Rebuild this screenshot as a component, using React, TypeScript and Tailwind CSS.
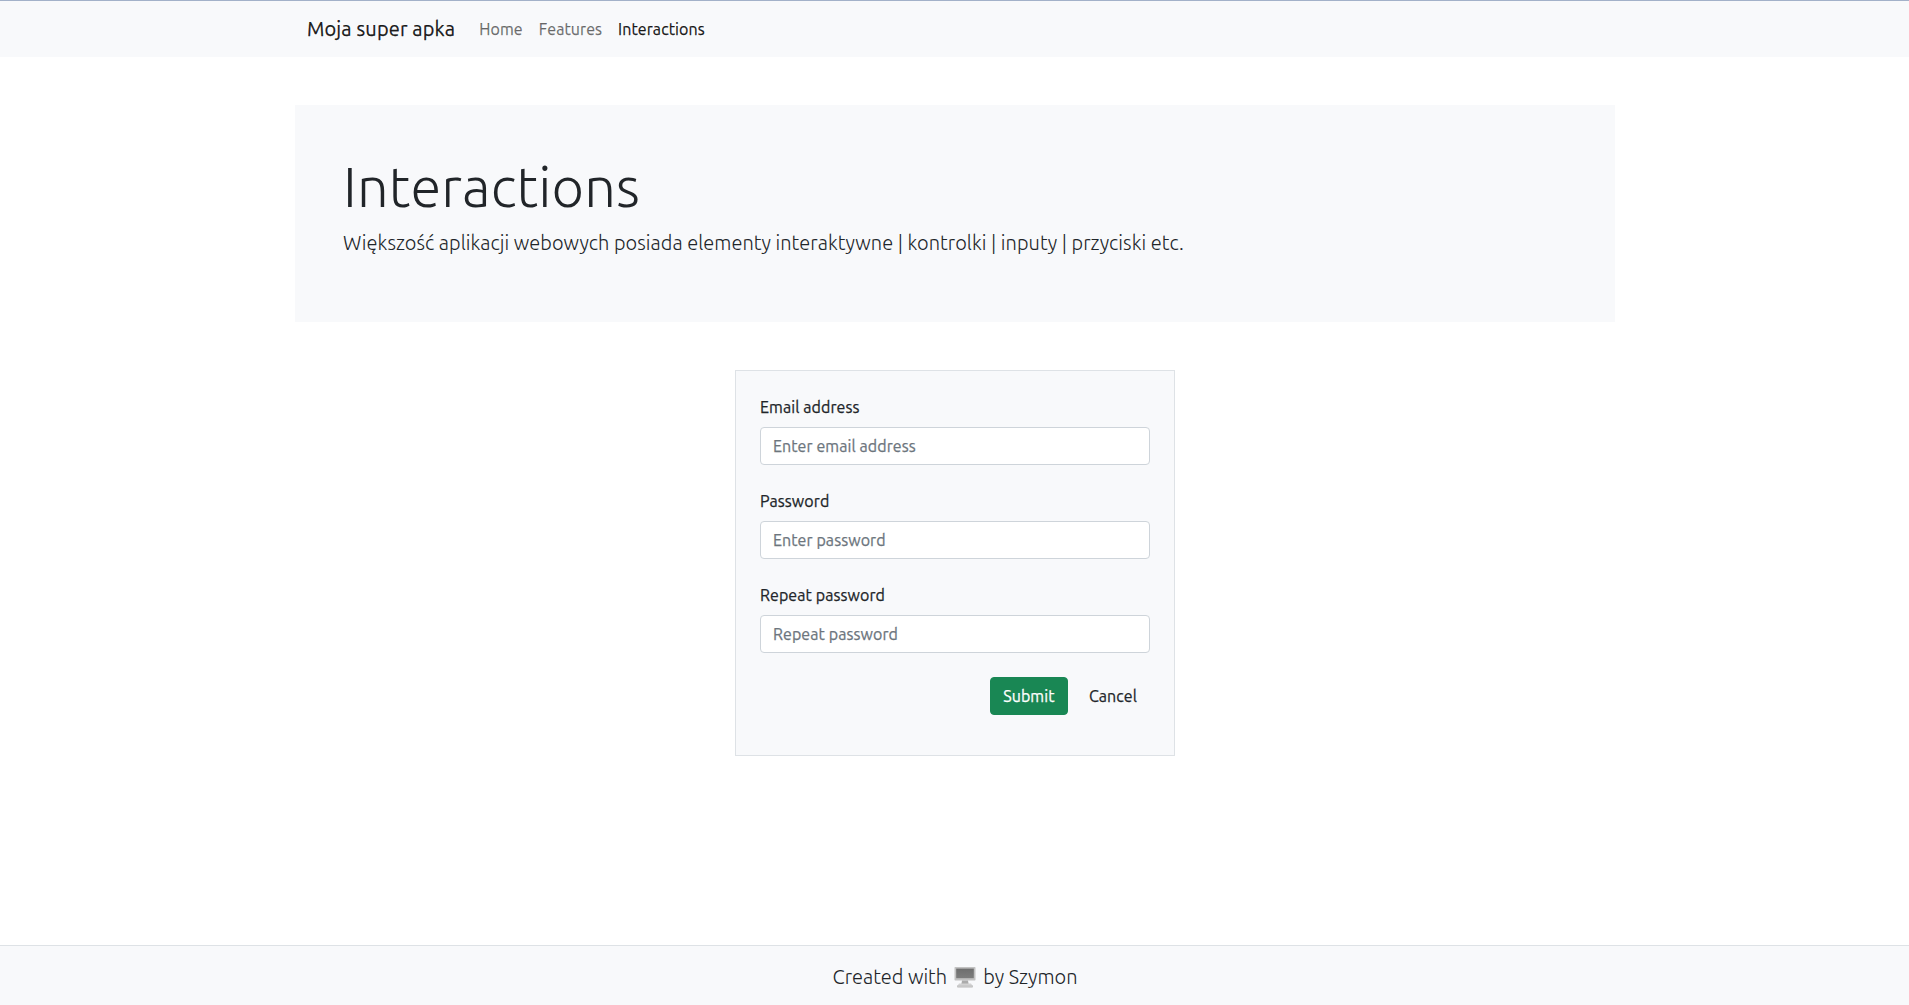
import React from "react";

const links = [
  { label: "Home", active: false },
  { label: "Features", active: false },
  { label: "Interactions", active: true },
];

const fields = [
  { id: "email", label: "Email address", placeholder: "Enter email address", type: "email" },
  { id: "password", label: "Password", placeholder: "Enter password", type: "password" },
  { id: "repeat", label: "Repeat password", placeholder: "Repeat password", type: "password" },
];

function Computer() {
  return (
    <svg className="h-[22px] w-[22px]" viewBox="0 0 22 22" aria-hidden="true">
      <defs>
        <linearGradient id="screen" x1="0" y1="0" x2="0" y2="1">
          <stop offset="0" stopColor="#6e6e6e" />
          <stop offset="1" stopColor="#7d7d7d" />
        </linearGradient>
      </defs>
      <rect x="0.5" y="1" width="21" height="13.5" rx="0.8" fill="#c2c2c2" />
      <rect x="2.2" y="2.6" width="17.6" height="9.6" fill="url(#screen)" />
      <path d="M8 14.5h6l.6 3.5H7.4z" fill="#ababab" />
      <path d="M5 17.6h12l1.2 1.6H3.8z" fill="#d2d2d2" />
      <rect x="3.2" y="19.2" width="15.6" height="2.2" rx="0.4" fill="#b8b8b8" />
      <path d="M4 20.2h14" stroke="#dedede" strokeWidth="0.6" />
    </svg>
  );
}

function Navbar() {
  return (
    <nav className="border-t border-[#a3b1c9] bg-[#f8f9fb] py-2">
      <div className="ml-[295px] flex w-[1320px] items-center px-3">
        <a className="mr-4 py-[5px] text-xl leading-[30px] tracking-[0.14px] text-black/90">Moja super apka</a>
        {links.map((l) => (
          <a key={l.label} className={l.active ? "p-2 text-black/90" : "p-2 text-black/55"}>
            {l.label}
          </a>
        ))}
      </div>
    </nav>
  );
}

export default function App() {
  return (
    <div className="flex h-[1005px] flex-col bg-white font-['Ubuntu','Noto_Sans',sans-serif] text-base leading-6 tracking-[0.08px] text-[#212529] [-webkit-text-stroke-width:0.25px]">
      <Navbar />
      <main className="ml-[295px] w-[1320px] grow">
        <section className="mt-12 h-[217px] bg-[#f8f9fb] p-12 [-webkit-text-stroke-width:0]">
          <h1 className="mb-2 text-[56px] leading-[67.2px] font-light tracking-[0.14px]">Interactions</h1>
          <p className="mb-4 text-xl leading-[30px] font-light tracking-[0.035px]">
            Większość aplikacji webowych posiada elementy interaktywne | kontrolki | inputy | przyciski etc.
          </p>
        </section>
        <form className="mx-auto mt-12 w-[440px] border border-[#dee2e6] bg-[#f8f9fb] p-6">
          {fields.map((f) => (
            <div key={f.id} className="mb-6">
              <label htmlFor={f.id} className="mb-2 block">
                {f.label}
              </label>
              <input
                id={f.id}
                type={f.type}
                placeholder={f.placeholder}
                className="block h-[38px] w-full rounded-[4px] border border-[#ced4da] bg-white px-3 placeholder:text-[#6c757d]"
              />
            </div>
          ))}
          <div className="mb-4 flex justify-end gap-2">
            <button type="button" className="w-[78px] rounded-[4px] border border-[#198754] bg-[#198754] py-1.5 text-white">
              Submit
            </button>
            <button type="button" className="rounded-[4px] border border-transparent px-3 py-1.5">
              Cancel
            </button>
          </div>
        </form>
      </main>
      <footer className="flex h-[60px] items-center justify-center gap-[7px] border-t border-[#dee2e6] bg-[#f8f9fb] pt-[2px] pl-px text-xl leading-[30px] font-light tracking-normal [-webkit-text-stroke-width:0]">
        <span>Created with</span>
        <Computer />
        <span>by Szymon</span>
      </footer>
    </div>
  );
}
